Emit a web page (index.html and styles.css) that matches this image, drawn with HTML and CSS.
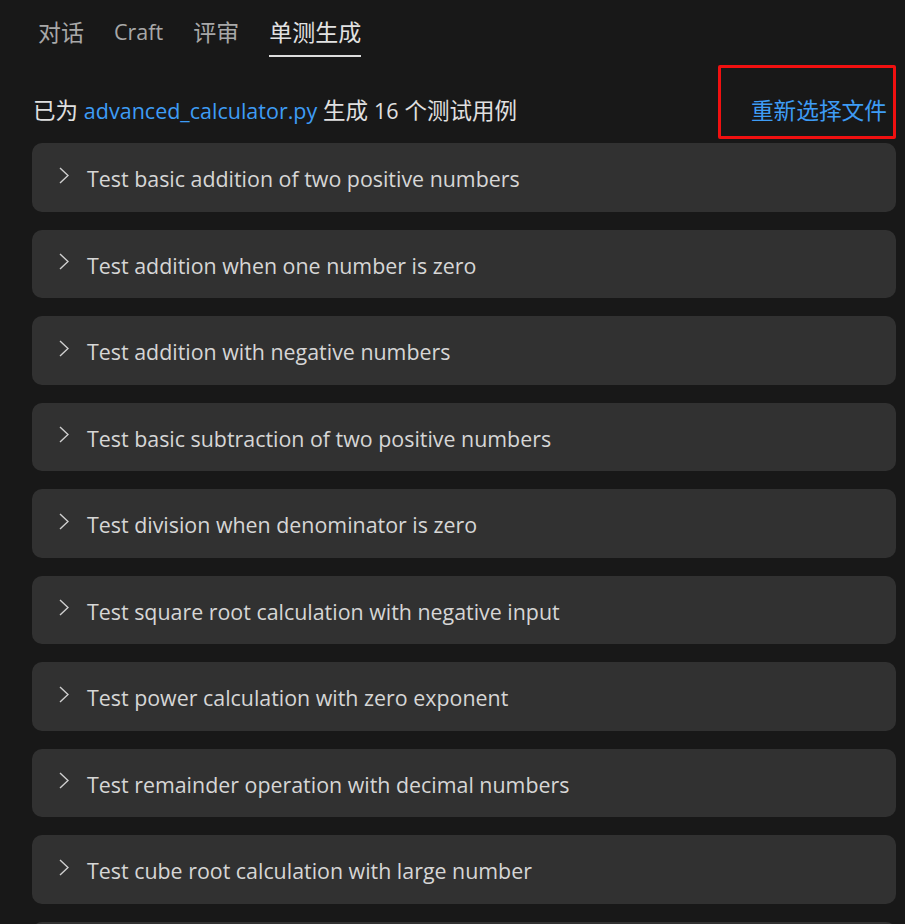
FILE: index.html
```html
<!DOCTYPE html>
<html lang="zh-CN">
<head>
    <meta charset="UTF-8">
    <meta name="viewport" content="width=device-width, initial-scale=1.0">
    <title>单测生成</title>
    <link rel="stylesheet" href="styles.css">
</head>
<body>
    <div class="page">
        <div class="tabs">
            <div class="tab">对话</div>
            <div class="tab latin">Craft</div>
            <div class="tab">评审</div>
            <div class="tab active">单测生成</div>
        </div>

        <div class="summary">
            <p>已为 <span class="file">advanced_calculator.py</span> 生成 <span class="num">16</span> 个测试用例</p>
            <a class="reselect" href="#">重新选择文件</a>
        </div>

        <div class="cases">
            <div class="case"><svg viewBox="0 0 10 17"><polyline points="1,1 9,8.5 1,16"/></svg><span>Test basic addition of two positive numbers</span></div>
            <div class="case"><svg viewBox="0 0 10 17"><polyline points="1,1 9,8.5 1,16"/></svg><span>Test addition when one number is zero</span></div>
            <div class="case"><svg viewBox="0 0 10 17"><polyline points="1,1 9,8.5 1,16"/></svg><span>Test addition with negative numbers</span></div>
            <div class="case"><svg viewBox="0 0 10 17"><polyline points="1,1 9,8.5 1,16"/></svg><span>Test basic subtraction of two positive numbers</span></div>
            <div class="case"><svg viewBox="0 0 10 17"><polyline points="1,1 9,8.5 1,16"/></svg><span>Test division when denominator is zero</span></div>
            <div class="case"><svg viewBox="0 0 10 17"><polyline points="1,1 9,8.5 1,16"/></svg><span>Test square root calculation with negative input</span></div>
            <div class="case"><svg viewBox="0 0 10 17"><polyline points="1,1 9,8.5 1,16"/></svg><span>Test power calculation with zero exponent</span></div>
            <div class="case"><svg viewBox="0 0 10 17"><polyline points="1,1 9,8.5 1,16"/></svg><span>Test remainder operation with decimal numbers</span></div>
            <div class="case"><svg viewBox="0 0 10 17"><polyline points="1,1 9,8.5 1,16"/></svg><span>Test cube root calculation with large number</span></div>
            <div class="case"><svg viewBox="0 0 10 17"><polyline points="1,1 9,8.5 1,16"/></svg><span>Test logarithm with invalid base</span></div>
        </div>
    </div>
</body>
</html>
```

FILE: styles.css
```css
body{
    margin: 0;
    background-color: #181818;
    color: #d6d6d6;
    font-family: "Open Sans", "Noto Sans CJK SC", sans-serif;
}
.page{
    height: 100vh;
    display: flex;
    flex-direction: column;
    padding: 17px 9px 0 32px;
    box-sizing: border-box;
    overflow: hidden;
}

.tabs{
    display: flex;
    gap: 30px;
    padding-left: 6px;
}
.tab{
    font-size: 23px;
    line-height: 30px;
    padding-bottom: 8px;
    border-bottom: 2px solid transparent;
    color: #a8a8a8;
}
.tab.latin{
    font-size: 21.5px;
}
.tab.active{
    color: #e2e2e2;
    border-bottom-color: #dcdcdc;
}

.summary{
    display: flex;
    justify-content: space-between;
    align-items: flex-end;
    margin-top: 8px;
    margin-bottom: 4px;
}
.summary p{
    margin: 0 0 13px 1px;
    font-size: 22.5px;
    line-height: 30px;
    color: #e0e0e0;
}
.file{
    color: #3e9cf5;
    font-size: 21.5px;
}
.num{
    font-size: 21.5px;
}
.reselect{
    font-size: 22.7px;
    line-height: 30px;
    color: #3e9cf5;
    text-decoration: none;
    border: 3px solid #f01010;
    border-radius: 2px;
    padding: 28px 6px 10px 30px;
}

.cases{
    flex: 1;
    overflow: hidden;
}
.case{
    height: 68.5px;
    margin-bottom: 18px;
    background-color: #313131;
    border-radius: 10px;
    display: flex;
    align-items: center;
    padding-left: 27px;
    font-size: 21.4px;
}
.case svg{
    width: 10px;
    height: 17px;
    margin: -4px 18px 0 0;
    fill: none;
    stroke: #cfcfcf;
    stroke-width: 1.4;
}
.case span{
    padding-top: 3px;
}
```
